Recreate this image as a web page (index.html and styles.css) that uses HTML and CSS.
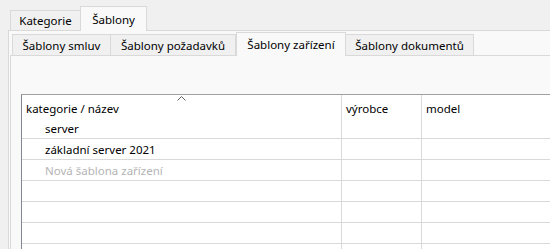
FILE: index.html
```html
<!DOCTYPE html>
<html lang="cs">
<head>
    <meta charset="UTF-8">
    <title>Šablony zařízení</title>
    <link rel="stylesheet" href="styles.css">
</head>
<body>
    <div class="tabs outer-tabs">
        <div class="tab tab-kategorie">Kategorie</div>
        <div class="tab tab-sablony selected">Šablony</div>
    </div>
    <div class="outer-panel">
        <div class="tabs inner-tabs">
            <div class="tab tab-smluv">Šablony smluv</div>
            <div class="tab tab-pozadavku">Šablony požadavků</div>
            <div class="tab tab-zarizeni selected">Šablony zařízení</div>
            <div class="tab tab-dokumentu">Šablony dokumentů</div>
        </div>
        <div class="inner-panel">
            <div class="grid">
                <div class="row header">
                    <div class="cell col-name">
                        kategorie / název
                        <svg class="sort-caret" width="9" height="5" viewBox="0 0 9 5">
                            <polyline points="0.5,4.5 4.5,0.5 8.5,4.5" fill="none" stroke="#606060" stroke-width="1"/>
                        </svg>
                    </div>
                    <div class="cell col-maker">výrobce</div>
                    <div class="cell col-model">model</div>
                </div>
                <div class="row">
                    <div class="cell col-name indent">server</div>
                    <div class="cell col-maker"></div>
                    <div class="cell col-model"></div>
                </div>
                <div class="row">
                    <div class="cell col-name indent">základní server 2021</div>
                    <div class="cell col-maker"></div>
                    <div class="cell col-model"></div>
                </div>
                <div class="row">
                    <div class="cell col-name indent new-item">Nová šablona zařízení</div>
                    <div class="cell col-maker"></div>
                    <div class="cell col-model"></div>
                </div>
                <div class="row">
                    <div class="cell col-name"></div>
                    <div class="cell col-maker"></div>
                    <div class="cell col-model"></div>
                </div>
                <div class="row">
                    <div class="cell col-name"></div>
                    <div class="cell col-maker"></div>
                    <div class="cell col-model"></div>
                </div>
                <div class="row">
                    <div class="cell col-name"></div>
                    <div class="cell col-maker"></div>
                    <div class="cell col-model"></div>
                </div>
                <div class="row">
                    <div class="cell col-name"></div>
                    <div class="cell col-maker"></div>
                    <div class="cell col-model"></div>
                </div>
            </div>
        </div>
    </div>
</body>
</html>
```
FILE: styles.css
```css
body {
    margin: 0;
    width: 550px;
    height: 249px;
    overflow: hidden;
    background-color: #f0f0f0;
    font-family: 'Noto Sans', 'Open Sans', sans-serif;
    font-size: 11.5px;
    color: #000;
}
.tabs {
    display: flex;
    align-items: flex-end;
}
.tab {
    display: flex;
    align-items: center;
    justify-content: center;
    box-sizing: border-box;
    background: #f0f0f0;
    border: 1px solid #d9d9d9;
    border-bottom: none;
    white-space: nowrap;
}
.tab.selected {
    background: #f9f9f9;
    position: relative;
    z-index: 1;
}
.outer-tabs {
    padding-left: 10px;
    height: 31px;
}
.outer-tabs .tab {
    height: 20px;
    margin-bottom: 1px;
}
.outer-tabs .tab.selected {
    height: 25px;
    margin-bottom: 0;
}
.tab-kategorie {
    width: 70px;
    border-right: none;
}
.tab-sablony {
    width: 67px;
}
.outer-panel {
    margin-top: -1px;
    margin-left: 8px;
    border-top: 1px solid #d9d9d9;
    border-left: 1px solid #d9d9d9;
    background: #f9f9f9;
    height: 218px;
    overflow: hidden;
}
.inner-tabs {
    padding-left: 3px;
    padding-top: 1px;
    height: 24px;
}
.inner-tabs .tab {
    height: 21px;
    margin-bottom: 1px;
}
.inner-tabs .tab.selected {
    height: 24px;
    margin-bottom: 0;
}
.tab-smluv {
    width: 98px;
    border-right: none;
}
.tab-pozadavku {
    width: 126px;
}
.tab-zarizeni {
    width: 110px;
}
.tab-dokumentu {
    width: 128px;
    border-left: none;
}
.inner-panel {
    margin-top: -1px;
    margin-left: 1px;
    border-top: 1px solid #d9d9d9;
    border-left: 1px solid #d9d9d9;
    background: #f9f9f9;
    height: 194px;
    padding: 38px 0 0 10px;
    box-sizing: border-box;
    overflow: hidden;
}
.grid {
    width: 529px;
    height: 155px;
    overflow: hidden;
    background: #fff;
    border-top: 1px solid #a0a0a0;
    border-left: 1px solid #828790;
}
.row {
    display: flex;
    height: 21px;
    border-bottom: 1px solid #d9d9d9;
    box-sizing: border-box;
}
.row.header {
    height: 23px;
    border-bottom: none;
}
.cell {
    display: flex;
    align-items: center;
    box-sizing: border-box;
    padding-left: 4px;
    white-space: nowrap;
}
.col-name {
    width: 320px;
    border-right: 1px solid #d9d9d9;
    position: relative;
}
.col-maker {
    width: 80px;
    border-right: 1px solid #d9d9d9;
}
.col-model {
    flex: 1;
}
.indent {
    padding-left: 23px;
}
.new-item {
    color: #b4b4b4;
}
.header .cell {
    padding-top: 3px;
}
.sort-caret {
    position: absolute;
    left: 155px;
    top: 1px;
}
```
